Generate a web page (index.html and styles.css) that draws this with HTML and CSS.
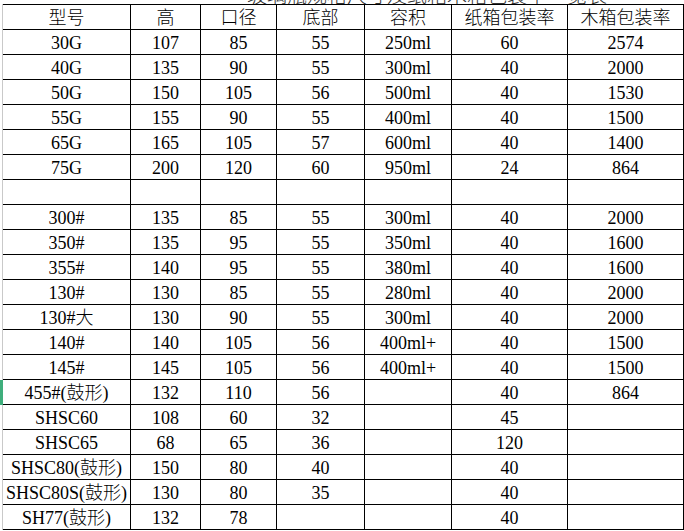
FILE: index.html
```html
<!DOCTYPE html>
<html lang="zh">
<head>
<meta charset="utf-8">
<title>玻璃瓶规格表</title>
<link rel="stylesheet" href="styles.css">
</head>
<body>
<div class="title"><span>玻璃瓶规格尺寸及纸箱木箱包装率一览表</span></div>
<div class="sheet">
  <div class="rh"></div><div class="c hd">型号</div><div class="c hd">高</div><div class="c hd">口径</div><div class="c hd">底部</div><div class="c hd">容积</div><div class="c hd">纸箱包装率</div><div class="c hd">木箱包装率</div>
  <div class="rh"></div><div class="c">30G</div><div class="c">107</div><div class="c">85</div><div class="c">55</div><div class="c">250ml</div><div class="c">60</div><div class="c">2574</div>
  <div class="rh"></div><div class="c">40G</div><div class="c">135</div><div class="c">90</div><div class="c">55</div><div class="c">300ml</div><div class="c">40</div><div class="c">2000</div>
  <div class="rh"></div><div class="c">50G</div><div class="c">150</div><div class="c">105</div><div class="c">56</div><div class="c">500ml</div><div class="c">40</div><div class="c">1530</div>
  <div class="rh"></div><div class="c">55G</div><div class="c">155</div><div class="c">90</div><div class="c">55</div><div class="c">400ml</div><div class="c">40</div><div class="c">1500</div>
  <div class="rh"></div><div class="c">65G</div><div class="c">165</div><div class="c">105</div><div class="c">57</div><div class="c">600ml</div><div class="c">40</div><div class="c">1400</div>
  <div class="rh"></div><div class="c">75G</div><div class="c">200</div><div class="c">120</div><div class="c">60</div><div class="c">950ml</div><div class="c">24</div><div class="c">864</div>
  <div class="rh"></div><div class="c"></div><div class="c"></div><div class="c"></div><div class="c"></div><div class="c"></div><div class="c"></div><div class="c"></div>
  <div class="rh"></div><div class="c">300#</div><div class="c">135</div><div class="c">85</div><div class="c">55</div><div class="c">300ml</div><div class="c">40</div><div class="c">2000</div>
  <div class="rh"></div><div class="c">350#</div><div class="c">135</div><div class="c">95</div><div class="c">55</div><div class="c">350ml</div><div class="c">40</div><div class="c">1600</div>
  <div class="rh"></div><div class="c">355#</div><div class="c">140</div><div class="c">95</div><div class="c">55</div><div class="c">380ml</div><div class="c">40</div><div class="c">1600</div>
  <div class="rh"></div><div class="c">130#</div><div class="c">130</div><div class="c">85</div><div class="c">55</div><div class="c">280ml</div><div class="c">40</div><div class="c">2000</div>
  <div class="rh"></div><div class="c">130#大</div><div class="c">130</div><div class="c">90</div><div class="c">55</div><div class="c">300ml</div><div class="c">40</div><div class="c">2000</div>
  <div class="rh"></div><div class="c">140#</div><div class="c">140</div><div class="c">105</div><div class="c">56</div><div class="c">400ml+</div><div class="c">40</div><div class="c">1500</div>
  <div class="rh"></div><div class="c">145#</div><div class="c">145</div><div class="c">105</div><div class="c">56</div><div class="c">400ml+</div><div class="c">40</div><div class="c">1500</div>
  <div class="rh sel"></div><div class="c">455#(鼓形)</div><div class="c">132</div><div class="c">110</div><div class="c">56</div><div class="c"></div><div class="c">40</div><div class="c">864</div>
  <div class="rh"></div><div class="c">SHSC60</div><div class="c">108</div><div class="c">60</div><div class="c">32</div><div class="c"></div><div class="c">45</div><div class="c"></div>
  <div class="rh"></div><div class="c">SHSC65</div><div class="c">68</div><div class="c">65</div><div class="c">36</div><div class="c"></div><div class="c">120</div><div class="c"></div>
  <div class="rh"></div><div class="c">SHSC80(鼓形)</div><div class="c">150</div><div class="c">80</div><div class="c">40</div><div class="c"></div><div class="c">40</div><div class="c"></div>
  <div class="rh"></div><div class="c">SHSC80S(鼓形)</div><div class="c">130</div><div class="c">80</div><div class="c">35</div><div class="c"></div><div class="c">40</div><div class="c"></div>
  <div class="rh"></div><div class="c">SH77(鼓形)</div><div class="c">132</div><div class="c">78</div><div class="c"></div><div class="c"></div><div class="c">40</div><div class="c"></div>
</div>
</body>
</html>
```
FILE: styles.css
```css
html, body {
  margin: 0;
  padding: 0;
  background: #ffffff;
}
body {
  width: 684px;
  height: 531px;
  overflow: hidden;
  font-family: "Liberation Serif", "Noto Sans CJK SC", serif;
  font-weight: 300;
  color: #000;
}
.title {
  height: 4px;
  overflow: hidden;
  display: flex;
  align-items: flex-end;
  justify-content: center;
  padding-left: 170px;
}
.title span {
  font-family: "Noto Sans CJK SC", sans-serif;
  font-size: 20px;
  line-height: 18px;
  white-space: nowrap;
  color: #333;
}
.sheet {
  display: grid;
  grid-template-columns: 3px 128px 70px 76px 88px 87px 116px 116px;
  grid-template-rows: 26px;
  grid-auto-rows: 25px;
}
.rh {
  box-sizing: border-box;
  border-right: 1px solid #c9c9c9;
  background: #fff;
}
.rh.sel {
  background: #3fae7c;
  border-right-color: #3fae7c;
}
.c {
  box-sizing: border-box;
  border-right: 1px solid #000;
  border-bottom: 1px solid #000;
  padding-top: 3px;
  font-size: 18px;
  line-height: 21px;
  text-align: center;
  white-space: nowrap;
  overflow: hidden;
}
.hd {
  border-top: 1px solid #000;
}
```
